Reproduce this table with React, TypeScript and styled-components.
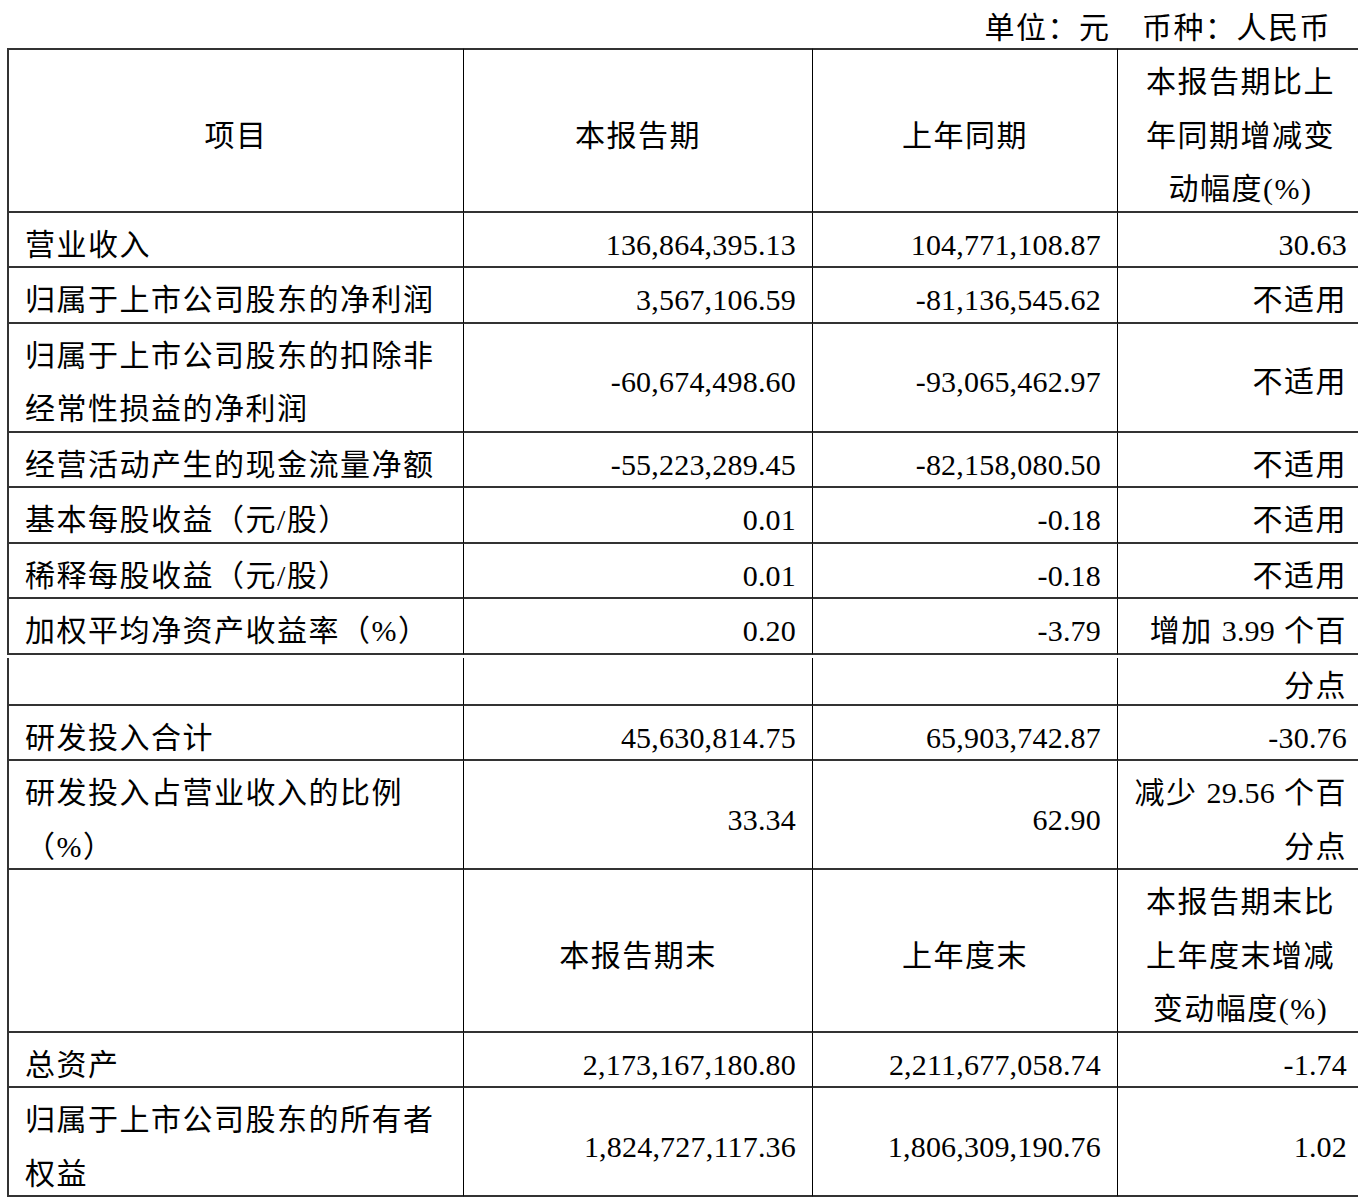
import React from "react";
import styled, { createGlobalStyle } from "styled-components";

const GlobalStyle = createGlobalStyle`
  html, body {
    margin: 0;
    padding: 0;
    background: #fff;
  }
  body {
    overflow-x: hidden;
    color: #000;
    font-family: "Liberation Serif", "Noto Sans CJK SC", serif;
  }
`;

const Page = styled.div`
  width: 1358px;
  overflow: hidden;
  padding-left: 7px;
  box-sizing: border-box;
`;

const Unit = styled.div`
  height: 48px;
  box-sizing: border-box;
  padding: 7px 27px 0 0;
  text-align: right;
  font-size: 30px;
  line-height: 41px;
  letter-spacing: 1.5px;
`;

const Table = styled.table`
  width: 1357px;
  table-layout: fixed;
  border-collapse: separate;
  border-spacing: 0;
  font-size: 30px;

  tr:first-child > td {
    border-top: 2px solid #333;
  }
`;

// text in the source sits a little below the middle of each line,
// so the cell gets extra room on top that the content gives back below
const Cell = styled.td<{ $align?: "left" | "right" | "center"; $lh?: number }>`
  padding: 5px 16px 0;
  border-right: 1px solid #000;
  border-bottom: 2px solid #333;
  text-align: ${(p) => p.$align ?? "right"};
  line-height: ${(p) => p.$lh ?? 53.5}px;
  vertical-align: middle;
  letter-spacing: 1.5px;
  white-space: nowrap;

  &:first-child {
    border-left: 2px solid #333;
  }
`;

const Content = styled.div`
  margin-bottom: -5px;
`;

const GapCell = styled.td`
  height: 3px;
  padding: 0;
  border: none;
  line-height: 0;
`;

const Num = styled.span`
  letter-spacing: 0.2px;
`;

type Row = {
  item: React.ReactNode;
  cur: string;
  prev: string;
  change: React.ReactNode;
};

const topRows: Row[] = [
  { item: "营业收入", cur: "136,864,395.13", prev: "104,771,108.87", change: <Num>30.63</Num> },
  { item: "归属于上市公司股东的净利润", cur: "3,567,106.59", prev: "-81,136,545.62", change: "不适用" },
  {
    item: (
      <>
        归属于上市公司股东的扣除非
        <br />
        经常性损益的净利润
      </>
    ),
    cur: "-60,674,498.60",
    prev: "-93,065,462.97",
    change: "不适用",
  },
  { item: "经营活动产生的现金流量净额", cur: "-55,223,289.45", prev: "-82,158,080.50", change: "不适用" },
  { item: "基本每股收益（元/股）", cur: "0.01", prev: "-0.18", change: "不适用" },
  { item: "稀释每股收益（元/股）", cur: "0.01", prev: "-0.18", change: "不适用" },
  {
    item: "加权平均净资产收益率（%）",
    cur: "0.20",
    prev: "-3.79",
    change: (
      <>
        增加 <Num>3.99</Num> 个百
      </>
    ),
  },
];

const rdRows: Row[] = [
  { item: "研发投入合计", cur: "45,630,814.75", prev: "65,903,742.87", change: <Num>-30.76</Num> },
  {
    item: (
      <>
        研发投入占营业收入的比例
        <br />
        （%）
      </>
    ),
    cur: "33.34",
    prev: "62.90",
    change: (
      <>
        减少 <Num>29.56</Num> 个百
        <br />
        分点
      </>
    ),
  },
];

const assetRows: Row[] = [
  { item: "总资产", cur: "2,173,167,180.80", prev: "2,211,677,058.74", change: <Num>-1.74</Num> },
  {
    item: (
      <>
        归属于上市公司股东的所有者
        <br />
        权益
      </>
    ),
    cur: "1,824,727,117.36",
    prev: "1,806,309,190.76",
    change: <Num>1.02</Num>,
  },
];

function DataRow({ row }: { row: Row }) {
  return (
    <tr>
      <Cell $align="left">
        <Content>{row.item}</Content>
      </Cell>
      <Cell>
        <Content>
          <Num>{row.cur}</Num>
        </Content>
      </Cell>
      <Cell>
        <Content>
          <Num>{row.prev}</Num>
        </Content>
      </Cell>
      <Cell>
        <Content>{row.change}</Content>
      </Cell>
    </tr>
  );
}

function HeadRow({ cols }: { cols: React.ReactNode[] }) {
  return (
    <tr>
      {cols.map((c, i) => (
        <Cell key={i} $align="center">
          {c && <Content>{c}</Content>}
        </Cell>
      ))}
    </tr>
  );
}

export default function App() {
  return (
    <Page>
      <GlobalStyle />
      <Unit>单位：元　币种：人民币</Unit>
      <Table>
        <colgroup>
          <col style={{ width: 457 }} />
          <col style={{ width: 349 }} />
          <col style={{ width: 305 }} />
          <col style={{ width: 246 }} />
        </colgroup>
        <tbody>
          <HeadRow
            cols={[
              "项目",
              "本报告期",
              "上年同期",
              <>
                本报告期比上
                <br />
                年同期增减变
                <br />
                动幅度(%)
              </>,
            ]}
          />
          {topRows.map((r, i) => (
            <DataRow key={`t${i}`} row={r} />
          ))}
          <tr>
            <GapCell />
            <GapCell />
            <GapCell />
            <GapCell />
          </tr>
          <tr>
            <Cell $lh={46} />
            <Cell $lh={46} />
            <Cell $lh={46} />
            <Cell $lh={46}>
              <Content>分点</Content>
            </Cell>
          </tr>
          {rdRows.map((r, i) => (
            <DataRow key={`r${i}`} row={r} />
          ))}
          <HeadRow
            cols={[
              null,
              "本报告期末",
              "上年度末",
              <>
                本报告期末比
                <br />
                上年度末增减
                <br />
                变动幅度(%)
              </>,
            ]}
          />
          {assetRows.map((r, i) => (
            <DataRow key={`a${i}`} row={r} />
          ))}
        </tbody>
      </Table>
    </Page>
  );
}
